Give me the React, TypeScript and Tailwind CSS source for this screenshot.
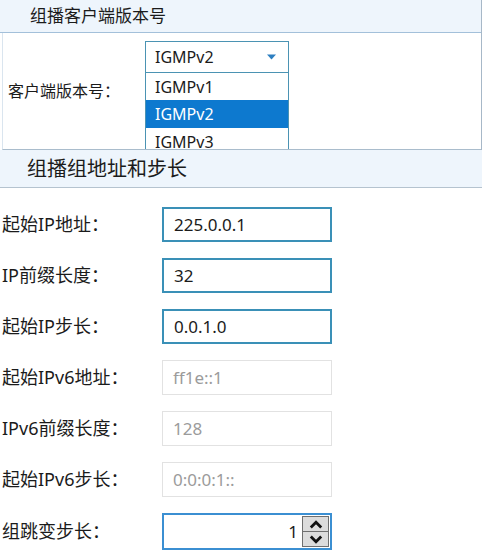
const fontStack = { fontFamily: '"Noto Sans", "Noto Sans CJK SC", sans-serif' };

type Field = {
  label: string;
  value: string;
  disabled?: boolean;
};

const fields: Field[] = [
  { label: "起始IP地址：", value: "225.0.0.1" },
  { label: "IP前缀长度：", value: "32" },
  { label: "起始IP步长：", value: "0.0.1.0" },
  { label: "起始IPv6地址：", value: "ff1e::1", disabled: true },
  { label: "IPv6前缀长度：", value: "128", disabled: true },
  { label: "起始IPv6步长：", value: "0:0:0:1::", disabled: true },
];

function SectionHeader({ title, className = "" }: { title: string; className?: string }) {
  return (
    <div className={`flex items-center bg-[#eef5fc] text-[#1b1b1b] ${className}`}>
      {title}
    </div>
  );
}

function VersionSelect() {
  const options = ["IGMPv1", "IGMPv2", "IGMPv3"];
  const selected = "IGMPv2";
  return (
    <div className="relative mt-[8px] w-[144px]">
      <div className="flex h-[32px] items-center justify-between border border-[#4b93b3] bg-white pl-[9px] pr-[12px] text-[16px] text-[#1b1b1b]">
        <span>{selected}</span>
        <svg width="9" height="6" viewBox="0 0 9 6">
          <path d="M0 0.5 H9 L4.5 5.5 Z" fill="#2d7fc1" />
        </svg>
      </div>
      <div className="absolute left-0 top-[31px] w-full border border-t-0 border-[#4b93b3] bg-white">
        {options.map((opt) => (
          <div
            key={opt}
            className={`flex h-[28px] items-center pl-[9px] text-[16px] ${
              opt === selected ? "bg-[#0d79cf] text-white" : "text-[#1b1b1b]"
            } ${opt === "IGMPv1" ? "border-t border-[#4b93b3]" : ""}`}
          >
            {opt}
          </div>
        ))}
      </div>
    </div>
  );
}

function Spinner({ value }: { value: number }) {
  return (
    <div className="flex h-full w-[170px] items-stretch border-2 border-[#3b8fd2] bg-white">
      <div className="flex flex-1 items-center justify-end pr-[4px] text-[17px] text-[#1b1b1b]">
        {value}
      </div>
      <div className="my-[1px] mr-[1px] flex w-[27px] flex-col border border-[#6f6f6f] bg-[#dcdcdc]">
        <div className="flex flex-1 items-center justify-center border-b border-[#6f6f6f]">
          <svg width="14" height="9" viewBox="0 0 14 9">
            <path d="M1.8 7.4 L7 2.2 L12.2 7.4" fill="none" stroke="#111" strokeWidth="2.8" />
          </svg>
        </div>
        <div className="flex flex-1 items-center justify-center">
          <svg width="14" height="9" viewBox="0 0 14 9">
            <path d="M1.8 1.6 L7 6.8 L12.2 1.6" fill="none" stroke="#111" strokeWidth="2.8" />
          </svg>
        </div>
      </div>
    </div>
  );
}

export default function App() {
  return (
    <div className="h-[551px] w-[484px] overflow-hidden bg-white" style={fontStack}>
      <div className="w-[482px] border-r border-[#a7b8c8]">
        <SectionHeader
          title="组播客户端版本号"
          className="h-[33px] border-b border-[#a3c0da] pl-[30px] text-[17px]"
        />
        <div className="relative ml-[2px] flex h-[117px] overflow-hidden border-b border-l border-b-[#a9bccc] border-l-[#dae5ef] bg-white">
          <div className="flex w-[142px] items-center pl-[5px] text-[16px] text-[#1b1b1b]">
            客户端版本号：
          </div>
          <VersionSelect />
        </div>
      </div>

      <SectionHeader
        title="组播组地址和步长"
        className="h-[38px] w-[482px] border-b border-[#b5c3cf] pl-[27px] text-[20px]"
      />

      <div className="flex flex-col gap-[16px] pt-[19px]">
        {fields.map((f) => (
          <div key={f.label} className="flex h-[35px] items-center">
            <div className="w-[162px] pl-[2px] text-[18px] text-[#1b1b1b]">{f.label}</div>
            <div
              className={`flex h-full w-[170px] items-center pl-[10px] text-[17px] ${
                f.disabled
                  ? "border border-[#e2e2e2] text-[#9b9b9b]"
                  : "border-2 border-[#3a90b7] text-[#1b1b1b]"
              }`}
            >
              {f.value}
            </div>
          </div>
        ))}
        <div className="flex h-[37px] items-center">
          <div className="w-[162px] pl-[2px] text-[18px] text-[#1b1b1b]">组跳变步长：</div>
          <Spinner value={1} />
        </div>
      </div>
    </div>
  );
}
